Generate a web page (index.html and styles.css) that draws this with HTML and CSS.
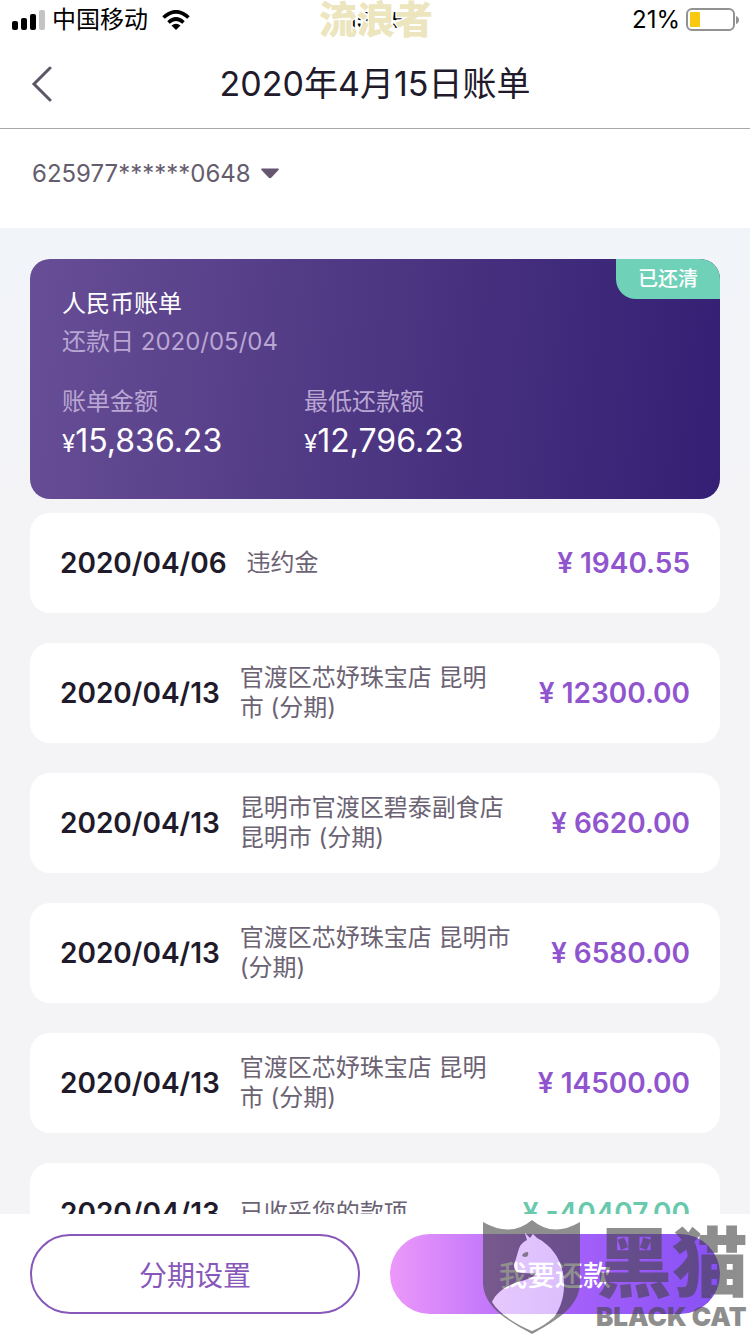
FILE: index.html
```html
<!DOCTYPE html>
<html lang="zh-CN">
<head>
<meta charset="utf-8">
<meta name="viewport" content="width=device-width, initial-scale=1">
<title>2020年4月15日账单</title>
<link rel="stylesheet" href="styles.css">
</head>
<body>
<div class="status">
  <div class="status-side">
    <svg class="signal" viewBox="0 0 34 20" aria-hidden="true"><rect x="0" y="11" width="6" height="9" rx="2"/><rect x="9" y="8" width="6" height="12" rx="2"/><rect x="18" y="4" width="6" height="16" rx="2"/><rect class="signal-off" x="27" y="0" width="6" height="20" rx="2"/></svg>
    <span>中国移动</span>
    <svg class="wifi" viewBox="0 0 28 20" aria-hidden="true"><path d="M1.500 7.500Q14-4 26.500 7.500M6.500 12.500Q14 5.500 21.500 12.500" fill="none" stroke="#000" stroke-width="3.600"/><path d="M9.500 15.500Q14 12 18.500 15.500L14 20Z"/></svg>
  </div>
  <div class="clock"><time>15:35</time><span class="nickname">流浪者</span></div>
  <div class="status-side status-end">
    <span>21%</span>
    <svg class="battery" viewBox="0 0 54 24" aria-hidden="true"><rect x="1" y="1" width="47" height="21" rx="5" fill="#fff" stroke="#929292" stroke-width="2"/><rect x="4" y="4" width="10" height="15" rx="1" fill="#f8c90e"/><path d="M50 8Q53 9 53 12Q53 15 50 16Z" fill="#929292"/></svg>
  </div>
</div>
<header class="header">
  <button class="back" aria-label="返回"><svg viewBox="0 0 22 38" aria-hidden="true"><path d="M20 3 4 19 20 35"/></svg></button>
  <h1>2020年4月15日账单</h1>
</header>
<div class="account">
  <select class="account-select" aria-label="卡号"><option>625977******0648</option></select>
  <svg class="caret" viewBox="0 0 18 11" aria-hidden="true"><path d="M1 .5H17Q18.500.5 17.500 2L10.500 9.500Q9 11 7.500 9.500L.5 2Q-.5.5 1 .5Z"/></svg>
</div>
<main class="content">
  <section class="bill">
    <div class="badge">已还清</div>
    <h2>人民币账单</h2>
    <p class="muted due">还款日 2020/05/04</p>
    <dl class="totals">
      <div><dt class="muted">账单金额</dt><dd><small>¥</small>15,836.23</dd></div>
      <div><dt class="muted">最低还款额</dt><dd><small>¥</small>12,796.23</dd></div>
    </dl>
  </section>
  <ul class="records">
    <li><time>2020/04/06</time><p>违约金</p><strong>¥ 1940.55</strong></li>
    <li><time>2020/04/13</time><p>官渡区芯妤珠宝店 昆明<br>市 (分期)</p><strong>¥ 12300.00</strong></li>
    <li><time>2020/04/13</time><p>昆明市官渡区碧泰副食店<br>昆明市 (分期)</p><strong>¥ 6620.00</strong></li>
    <li><time>2020/04/13</time><p>官渡区芯妤珠宝店 昆明市<br>(分期)</p><strong>¥ 6580.00</strong></li>
    <li><time>2020/04/13</time><p>官渡区芯妤珠宝店 昆明<br>市 (分期)</p><strong>¥ 14500.00</strong></li>
    <li><time>2020/04/13</time><p>已收妥您的款项</p><strong class="credit">¥ -40407.00</strong></li>
  </ul>
</main>
<footer class="actions">
  <button class="outline">分期设置</button>
  <button class="primary">我要还款</button>
  <div class="watermark">
    <svg class="shield" viewBox="0 0 97 114" aria-hidden="true">
      <path class="shield-bg" fill-rule="evenodd" d="M0 2Q28 18 49 0Q70 18 97 2V62C97 89 68 103 49 114C30 103 0 89 0 62ZM42 13 47 18 50 14 54 18C71 27 81 43 81 65C81 80 76 90 71 97Q61 106 49 111Q19 98 9 82C15 69 30 63 42 60Q52 57 53 53Q42 54 34 52Q29 47 32 42L35 32Q37 23 44 20Z"/>
      <path class="cat" d="M42 13 47 18 50 14 54 18C71 27 81 43 81 65C81 80 76 90 71 97Q61 106 49 111Q19 98 9 82C15 69 30 63 42 60Q52 57 53 53Q42 54 34 52Q29 47 32 42L35 32Q37 23 44 20Z"/>
      <path class="shield-bg" d="M39 36Q40 32 45 32Q46 36 43 37Q41 37 39 36Z"/>
    </svg>
    <div class="brand"><span class="brand-cn">黑猫</span><span class="brand-en">BLACK CAT</span></div>
  </div>
</footer>
</body>
</html>
```

FILE: styles.css
```css
* { box-sizing: border-box; }
body {
  margin: 0;
  height: 100vh;
  display: flex;
  flex-direction: column;
  background: #fff;
  color: #201a2b;
  font-family: Inter, "Noto Sans CJK SC", sans-serif;
  font-size: 24px;
}
h1, h2, p, dl, dd, ul { margin: 0; padding: 0; font-weight: 400; }
button, select { font: inherit; border: 0; background: none; padding: 0; cursor: pointer; }

.status {
  flex: none;
  height: 40px;
  padding: 0 10px 0 12px;
  display: grid;
  grid-template-columns: 1fr auto 1fr;
  align-items: center;
  color: #000;
}
.status-side { display: flex; align-items: center; gap: 6px; line-height: 40px; }
.status-end { justify-content: flex-end; }
.signal { width: 34px; height: 20px; }
.signal-off { fill: #c4c4c4; }
.wifi { width: 28px; height: 20px; margin-left: 8px; }
.battery { width: 54px; height: 24px; }
.clock { position: relative; font-size: 22px; font-weight: 600; }
.nickname {
  position: absolute;
  left: 50%;
  top: 40%;
  transform: translate(-50%, -50%);
  white-space: nowrap;
  font: 900 38px/40px "Noto Sans CJK SC", sans-serif;
  color: #ece5bd;
  -webkit-text-stroke: 3px #fff;
  paint-order: stroke fill;
}

.header {
  flex: none;
  height: 89px;
  padding: 0 30px;
  display: grid;
  grid-template-columns: 1fr auto 1fr;
  align-items: center;
  border-bottom: 1px solid #aaa9ad;
}
.header h1 { font-size: 34px; line-height: 48px; }
.back { width: 24px; height: 38px; }
.back svg { display: block; width: 22px; height: 38px; fill: none; stroke: #5d5665; stroke-width: 3px; stroke-linecap: round; }

.account { flex: none; height: 99px; padding: 24px 32px; display: flex; align-items: flex-start; gap: 10px; }
.account-select { appearance: none; color: #655d6d; height: 40px; }
.caret { width: 18px; height: 11px; margin-top: 15px; fill: #66566f; }

.content {
  flex: 1;
  min-height: 0;
  overflow: hidden;
  padding: 31px 30px 0;
  background: linear-gradient(#f1f4f9, #f4f4f7 271px);
}
.bill {
  position: relative;
  height: 240px;
  padding: 26px 32px;
  border-radius: 20px;
  overflow: hidden;
  color: #fff;
  background: linear-gradient(95deg, #674e96, #4c3581 52%, #341f74);
}
.bill h2 { font-size: 24px; line-height: 38px; }
.muted { color: #b9a6d3; line-height: 38px; }
.badge {
  position: absolute;
  top: 0;
  right: 0;
  width: 104px;
  height: 40px;
  font-size: 20px;
  font-weight: 500;
  line-height: 40px;
  text-align: center;
  background: #70d1b9;
  border-radius: 0 0 0 20px;
}
.totals { display: grid; grid-template-columns: 242px 1fr; margin-top: 22px; }
.totals dd { font-size: 32px; line-height: 40px; }
.totals small { font-size: 24px; }

.records { list-style: none; margin-top: 14px; display: grid; gap: 30px; }
.records li {
  height: 100px;
  padding: 0 30px;
  display: flex;
  align-items: center;
  gap: 20px;
  background: #fff;
  border-radius: 20px;
}
.records time { font-size: 28px; font-weight: 600; white-space: nowrap; }
.records p { flex: 1; line-height: 30px; color: #6b6273; white-space: nowrap; }
.records strong { font-size: 28px; font-weight: 600; color: #9055ce; white-space: nowrap; }
.records .credit { color: #68c9ad; }

.actions {
  flex: none;
  position: relative;
  display: grid;
  grid-template-columns: 1fr 1fr;
  gap: 30px;
  padding: 20px 30px;
  background: #fff;
}
.actions button { height: 80px; border-radius: 40px; font-size: 28px; }
.actions .outline { border: 2px solid #8758ba; color: #8758ba; }
.actions .primary { color: #fff; font-weight: 500; background: linear-gradient(90deg, #ec98fa, #a862fa 50%, #8750f4); }

.watermark { position: absolute; right: 2px; bottom: 0; display: flex; gap: 16px; pointer-events: none; }
.shield { width: 97px; height: 114px; }
.shield-bg { fill: #444; fill-opacity: .6; }
.cat { fill: #fff; fill-opacity: .6; }
.brand { display: flex; flex-direction: column; gap: 6px; color: #444; opacity: .6; }
.brand-cn { font: 900 76px/76px "Noto Sans CJK SC", sans-serif; }
.brand-en { font: 900 26px/30px Inter, sans-serif; white-space: nowrap; }
```
